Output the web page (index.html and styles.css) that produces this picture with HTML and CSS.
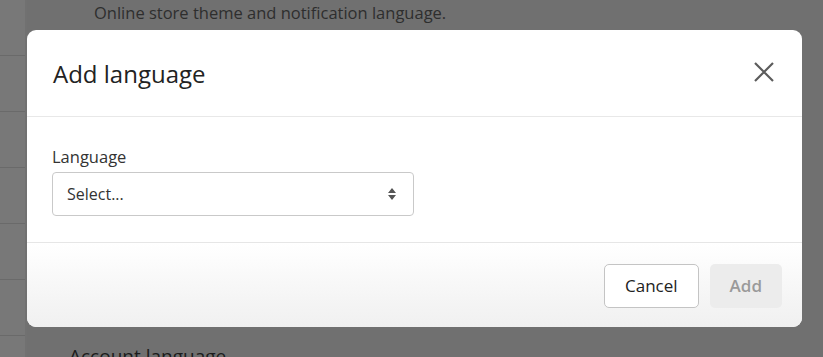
FILE: index.html
```html
<!DOCTYPE html>
<html lang="en">
<head>
    <meta charset="UTF-8">
    <meta name="viewport" content="width=device-width, initial-scale=1.0">
    <title>Add language</title>
    <link rel="stylesheet" href="styles.css">
</head>
<body>
    <div class="page">
        <div class="sidebar">
            <div class="side-row"></div>
            <div class="side-row"></div>
            <div class="side-row"></div>
            <div class="side-row"></div>
            <div class="side-row"></div>
            <div class="side-row"></div>
            <div class="side-row"></div>
        </div>
        <div class="content">
            <p class="hint">Online store theme and notification language.</p>
            <h2 class="section-title">Account language</h2>
        </div>
    </div>

    <div class="modal">
        <div class="modal-header">
            <h1>Add language</h1>
            <button class="close" aria-label="Close">
                <svg width="22" height="22" viewBox="0 0 22 22">
                    <path d="M2 2 L20 20 M20 2 L2 20" stroke="#5c5c5c" stroke-width="2.2" fill="none"/>
                </svg>
            </button>
        </div>
        <div class="modal-body">
            <label class="field-label" for="lang">Language</label>
            <div class="select">
                <span>Select...</span>
                <svg width="10" height="14" viewBox="0 0 10 14">
                    <path d="M5 1 L9 6 H1 Z M5 13 L9 8 H1 Z" fill="#555"/>
                </svg>
            </div>
        </div>
        <div class="modal-footer">
            <button class="btn">Cancel</button>
            <button class="btn btn-disabled">Add</button>
        </div>
    </div>
</body>
</html>
```

FILE: styles.css
```css
body {
    margin: 0;
    width: 823px;
    height: 357px;
    overflow: hidden;
    background: #6c6c6c;
    font-family: "Open Sans", "Noto Sans", sans-serif;
    position: relative;
}
.page {
    display: flex;
    height: 100%;
}
.sidebar {
    width: 25px;
    background: #787878;
    border-right: 2px solid #717171;
}
.side-row {
    height: 55px;
    border-bottom: 1px solid #6a6a6a;
}
.content {
    flex: 1;
    display: flex;
    flex-direction: column;
    justify-content: space-between;
    background: #707070;
}
.hint {
    margin: 0;
    padding: 1px 0 0 67px;
    font-size: 16.5px;
    color: #2e2e2e;
}
.section-title {
    margin: 0 0 -12px 42px;
    font-size: 19px;
    font-weight: 400;
    color: #1c1c1c;
}
.modal {
    position: absolute;
    left: 27px;
    top: 30px;
    width: 775px;
    height: 297px;
    background: #fff;
    border-radius: 9px;
    overflow: hidden;
    display: flex;
    flex-direction: column;
}
.modal-header {
    height: 86px;
    display: flex;
    align-items: center;
    justify-content: space-between;
    padding: 0 26px;
    border-bottom: 1px solid #e8e8e8;
}
.modal-header h1 {
    margin: 0;
    font-size: 24px;
    font-weight: 400;
    color: #222;
}
.close {
    border: none;
    background: none;
    padding: 0;
    margin-right: 1px;
    margin-top: -2px;
    display: flex;
}
.modal-body {
    height: 125px;
    padding: 0 25px;
    border-bottom: 1px solid #e6e6e6;
}
.field-label {
    display: block;
    margin-top: 29px;
    font-size: 16.5px;
    color: #333;
    line-height: 21px;
}
.select {
    margin-top: 5px;
    width: 362px;
    height: 44px;
    box-sizing: border-box;
    border: 1px solid #c9c9c9;
    border-radius: 4px;
    display: flex;
    align-items: center;
    justify-content: space-between;
    padding: 0 16px 0 14px;
    font-size: 16px;
    color: #333;
}
.modal-footer {
    flex: 1;
    display: flex;
    justify-content: flex-end;
    align-items: center;
    padding: 0 20px 0 0;
    gap: 11px;
    background: linear-gradient(#ffffff, #f0f0f0);
}
.btn {
    font-family: inherit;
    font-size: 17px;
    height: 44px;
    padding: 0 20px;
    border: 1px solid #c4c4c4;
    border-radius: 5px;
    background: #fff;
    color: #222;
    margin-top: 1px;
}
.btn-disabled {
    border-color: transparent;
    background: #ececec;
    color: #9a9a9a;
    font-weight: 600;
    padding: 0 19px;
}
```
